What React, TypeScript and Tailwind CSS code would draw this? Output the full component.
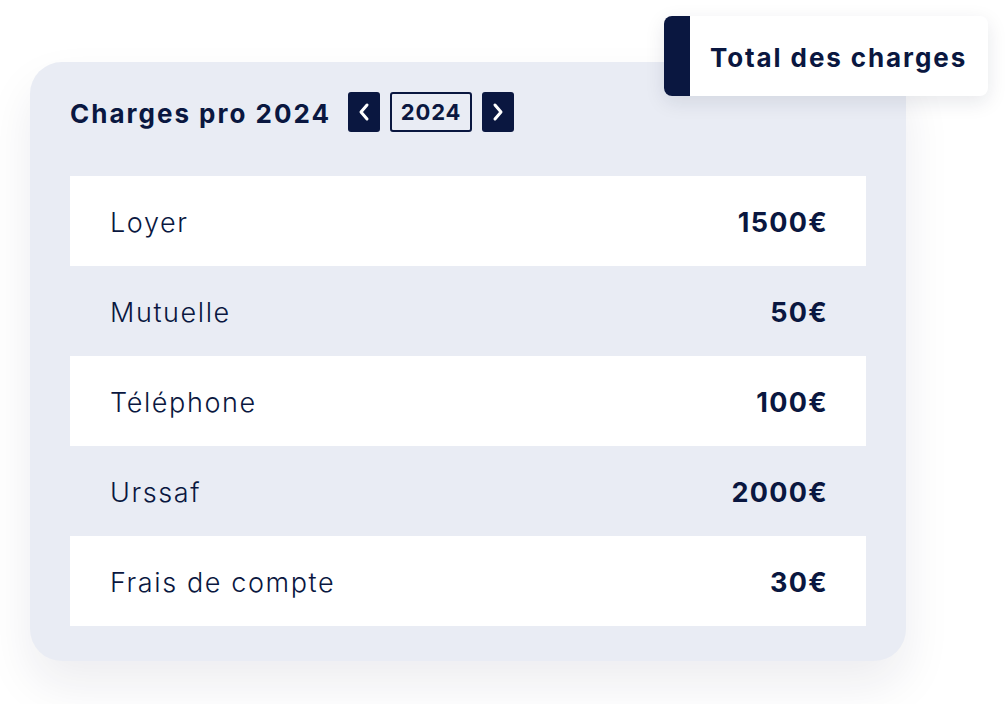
const rows = [
  { label: "Loyer", amount: "1500€" },
  { label: "Mutuelle", amount: "50€" },
  { label: "Téléphone", amount: "100€" },
  { label: "Urssaf", amount: "2000€" },
  { label: "Frais de compte", amount: "30€" },
];

function Chevron({ dir }: { dir: "left" | "right" }) {
  return (
    <svg width="14" height="20" viewBox="0 0 14 20" fill="none">
      <polyline
        points={dir === "left" ? "10,3 4,10 10,17" : "4,3 10,10 4,17"}
        stroke="white"
        strokeWidth="3"
        strokeLinecap="round"
        strokeLinejoin="round"
      />
    </svg>
  );
}

export default function App() {
  return (
    <div
      className="min-h-[704px] w-[1008px] bg-white pl-[30px] pt-[62px] text-[#0a1740]"
      style={{ fontFamily: "Inter, 'Noto Sans', sans-serif" }}
    >
      <div className="relative w-[876px] rounded-[32px] bg-[#e9ecf4] px-10 pb-[35px] pt-[30px] shadow-[0_24px_48px_rgba(20,30,60,0.08)]">
        {/* Total badge overlapping the card */}
        <div className="absolute -top-[46px] left-[634px] flex h-20 w-[324px] overflow-hidden rounded-lg bg-white shadow-[0_6px_20px_rgba(20,30,60,0.10)]">
          <div className="w-[26px] bg-[#0a1740]" />
          <div className="flex items-center pl-5 pt-0.5 text-[26px] font-bold tracking-[1.9px]">
            Total des charges
          </div>
        </div>

        {/* Header */}
        <div className="flex h-10 items-center">
          <h2 className="w-[278px] pt-0.5 text-[26px] font-bold tracking-[2px]">Charges pro 2024</h2>
          <div className="flex items-center gap-[10px]">
            <button className="flex h-10 w-8 items-center justify-center rounded-[3px] bg-[#0a1740]">
              <Chevron dir="left" />
            </button>
            <div className="flex h-10 w-[82px] items-center justify-center rounded-[3px] border-2 border-[#0a1740] pt-px text-[22px] font-bold tracking-[0.8px]">
              2024
            </div>
            <button className="flex h-10 w-8 items-center justify-center rounded-[3px] bg-[#0a1740]">
              <Chevron dir="right" />
            </button>
          </div>
        </div>

        {/* Rows */}
        <div className="mt-11">
          {rows.map((r, i) => (
            <div
              key={r.label}
              className={`flex h-[90px] items-center justify-between px-10 pt-1 ${i % 2 === 0 ? "bg-white" : ""}`}
            >
              <span className="text-[27px] font-light tracking-[1.6px]">{r.label}</span>
              <span className="-mr-[2px] text-[27px] font-bold tracking-[1.3px]">{r.amount}</span>
            </div>
          ))}
        </div>
      </div>
    </div>
  );
}
